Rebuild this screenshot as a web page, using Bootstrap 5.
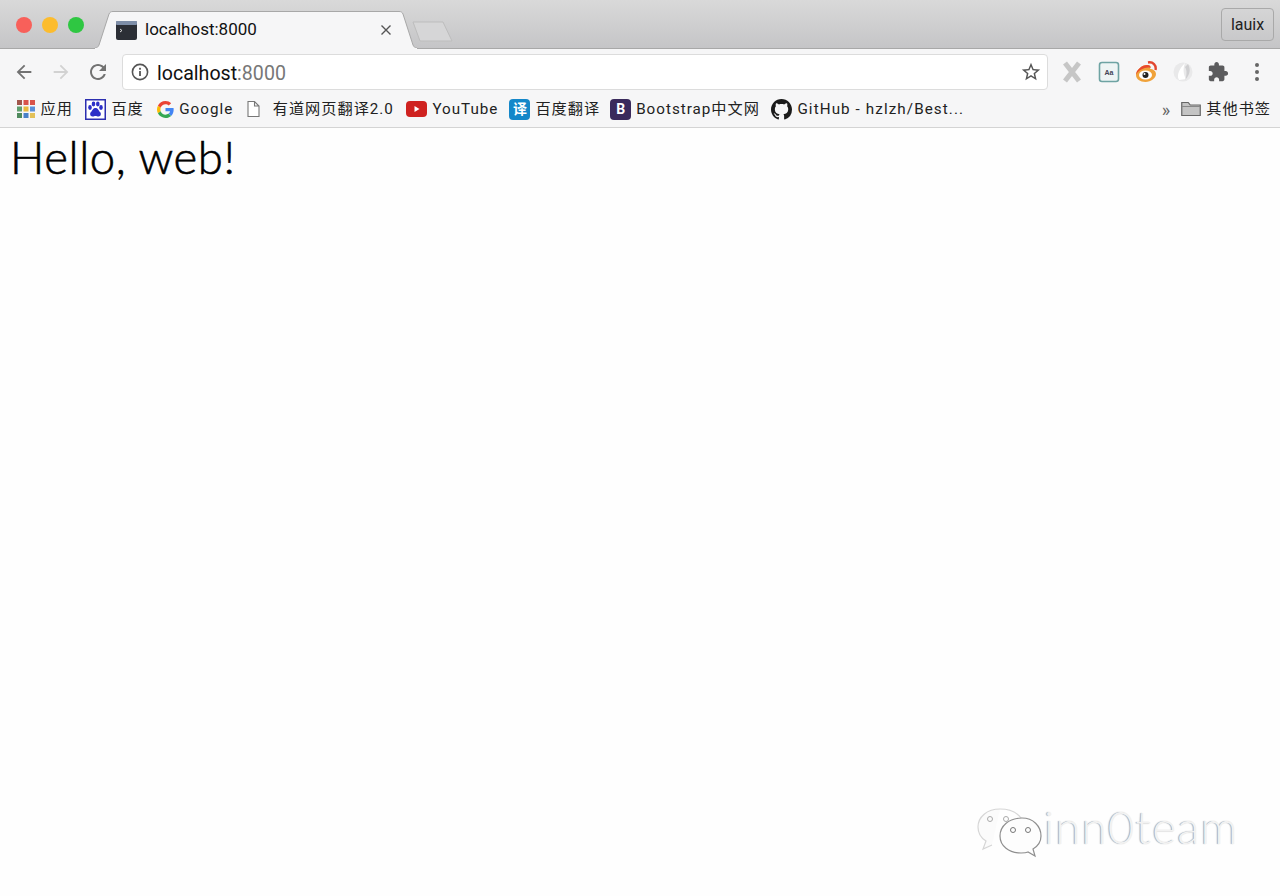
<!DOCTYPE html>
<html lang="en">
<head>
  <meta charset="UTF-8" />
  <title>localhost:8000</title>
  <link href="https://cdn.jsdelivr.net/npm/bootstrap@5.3.3/dist/css/bootstrap.min.css" rel="stylesheet">
  <style>
    html, body { height: 100%; }
    body {
      background: #fefefe;
      color: #111;
      font-family: Roboto, "Noto Sans CJK SC", sans-serif;
      overflow: hidden;
    }
    .browser-top { height: 128px; border-bottom: 1px solid #d4d4d4; }

    /* title strip */
    .tab-strip {
      height: 49px;
      background: linear-gradient(#d9d9d9, #c5c5c7);
      border-bottom: 1px solid #a8a8a8;
      padding-left: 16px;
    }
    .traffic { width: 16px; height: 16px; border-radius: 50%; margin-right: 10px; margin-top: 17px; }
    .traffic-red { background: #f8605a; }
    .traffic-yellow { background: #fcbc2e; }
    .traffic-green { background: #2fc742; margin-right: 0; }
    .page-tab {
      width: 324px; height: 38px; margin-left: 10px; margin-top: 11px;
      padding: 0 26px 0 22px; z-index: 1;
      font-size: 17px;
    }
    .tab-shape { position: absolute; left: 0; top: 0; }
    .tab-label { position: relative; margin-left: 8px; }
    .tab-favicon { position: relative; }
    .tab-close { position: relative; margin-left: auto; }
    .new-tab { margin-left: -8px; margin-top: 21px; }
    .profile-chip {
      width: 53px; height: 33px; margin-top: 8px; margin-right: 6px;
      border: 1px solid #a9a9a9; border-radius: 4px;
      font-size: 16px; color: #222;
    }

    /* toolbar */
    .tool-row { height: 43px; background: #f6f6f7; padding: 3px 0 0 13px; }
    .tool-btn { width: 22px; height: 22px; margin-right: 15px; }
    .tool-reload { width: 24px; height: 24px; margin-left: -1px; margin-right: 14px; }
    .address-box {
      width: 926px; height: 36px; margin-left: -2px;
      background: #fff; border: 1px solid #dcdcdc; border-radius: 4px;
      padding: 0 5px 0 8px; font-size: 19.6px;
    }
    .address-box .url-port { color: #777; }
    .url-text { margin-left: 8px; position: relative; top: 2px; }
    .ext-row { gap: 15px; margin-left: 13px; }
    .ext-slot { width: 22px; height: 22px; }
    .ext-puzzle { margin-left: -2px; margin-right: 2px; }

    /* bookmarks */
    .mark-row {
      height: 35px; background: #f6f6f7; padding: 0 9px 0 17px;
      font-size: 15.2px; letter-spacing: 1px; color: #222; white-space: nowrap;
    }
    .mark-item { gap: 5.5px; margin-right: 12px; }
    .mark-tile {
      width: 21px; height: 21px; border-radius: 4px; color: #fff;
      font-size: 14px; font-weight: 700; letter-spacing: 0;
    }
    .tile-fanyi { background: #1487c9; }
    .tile-bs { background: #3a2a5c; }
    .g-icon { margin-left: 1px; }
    .doc-icon { margin-right: 6px; }
    .mark-yt { margin-right: 11px; }
    .mark-fanyi { gap: 5px; margin-right: 10px; }
    .mark-bs { gap: 5px; margin-right: 11px; }
    .mark-last { letter-spacing: 1.1px; }
    .more-marks { margin-left: auto; margin-right: 10px; color: #666; font-size: 18px; }
    .other-marks { gap: 5px; }

    /* page */
    .hello-text {
      font-family: Lato, sans-serif; font-weight: 300;
      font-size: 45.5px; line-height: 1; color: #000;
      letter-spacing: .6px;
      -webkit-text-stroke: .6px #000;
      margin: 6px 0 0 10px;
    }
    .wm-mark { position: absolute; left: 976px; top: 805px; }
    .wm-text {
      position: absolute; left: 1044px; top: 799px;
      font-family: Lato, sans-serif; font-weight: 300; font-size: 46px; line-height: 1.2;
      letter-spacing: 1px;
      color: #f2f2f2; text-shadow: -1px 0 1px #a8a8a8;
    }
  </style>
</head>
<body>

  <div class="browser-top">
    <!-- tabs -->
    <div class="tab-strip d-flex">
      <span class="traffic traffic-red"></span>
      <span class="traffic traffic-yellow"></span>
      <span class="traffic traffic-green"></span>

      <div class="page-tab position-relative d-flex align-items-center">
        <svg class="tab-shape" width="324" height="38" viewBox="0 0 324 38">
          <path d="M0 38 L1 37 C3 37 4 36 5 34 L15 3 C16 1 17 .5 19 .5 H305 C307 .5 308 1 309 3 L319 34 C320 36 321 37 323 37 L324 38 Z" fill="#f6f6f7" stroke="#a8a8a8" stroke-width="1"/>
          <rect x="1" y="37" width="322" height="1" fill="#f6f6f7"/>
        </svg>
        <svg class="tab-favicon" width="21" height="19" viewBox="0 0 21 19">
          <rect width="21" height="19" rx="2" fill="#2c2f36"/>
          <rect width="21" height="4" rx="1" fill="#7e8ea8"/>
          <path d="M4 8l2 1.5-2 1.5" fill="none" stroke="#ddd" stroke-width="1"/>
        </svg>
        <span class="tab-label">localhost:8000</span>
        <svg class="tab-close" width="12" height="12" viewBox="0 0 12 12"><path d="M1.5 1.5l9 9M10.5 1.5l-9 9" stroke="#555" stroke-width="1.4"/></svg>
      </div>

      <svg class="new-tab" width="44" height="22" viewBox="0 0 44 22">
        <path d="M3 1 H33 L42 20 H10 Z" fill="#d6d6d7" stroke="#bdbdbd" stroke-width="1" stroke-linejoin="round"/>
      </svg>

      <div class="profile-chip ms-auto d-flex align-items-center justify-content-center">lauix</div>
    </div>

    <!-- toolbar -->
    <div class="tool-row d-flex align-items-center">
      <svg class="tool-btn" viewBox="0 0 24 24" fill="#727272"><path d="M20 11H7.83l5.59-5.59L12 4l-8 8 8 8 1.41-1.41L7.83 13H20v-2z"/></svg>
      <svg class="tool-btn" viewBox="0 0 24 24" fill="#d2d2d2"><path d="M4 11h12.170l-5.590-5.590L12 4l8 8-8 8-1.410-1.410L16.170 13H4v-2z"/></svg>
      <svg class="tool-btn tool-reload" viewBox="0 0 24 24" fill="#727272"><path d="M17.65 6.35C16.2 4.9 14.21 4 12 4c-4.42 0-7.99 3.58-7.99 8s3.57 8 7.99 8c3.73 0 6.84-2.55 7.73-6h-2.08c-.82 2.33-3.04 4-5.65 4-3.31 0-6-2.69-6-6s2.69-6 6-6c1.66 0 3.14.69 4.22 1.78L13 11h7V4l-2.35 2.35z"/></svg>

      <div class="address-box d-flex align-items-center">
        <svg width="18" height="18" viewBox="0 0 18 18">
          <circle cx="9" cy="9" r="7.6" fill="none" stroke="#555" stroke-width="1.6"/>
          <rect x="8.1" y="8" width="1.8" height="5" fill="#555"/>
          <rect x="8.1" y="4.8" width="1.8" height="1.9" fill="#555"/>
        </svg>
        <span class="url-text">localhost<span class="url-port">:8000</span></span>
        <svg class="ms-auto" width="22" height="22" viewBox="0 0 24 24" fill="#555"><path d="M22 9.24l-7.19-.62L12 2 9.19 8.63 2 9.24l5.46 4.73L5.82 21 12 17.27 18.18 21l-1.63-7.03L22 9.24zM12 15.4l-3.76 2.27 1-4.28-3.32-2.88 4.38-.38L12 6.1l1.71 4.04 4.38.38-3.32 2.88 1 4.28L12 15.4z"/></svg>
      </div>

      <div class="ext-row d-flex align-items-center">
        <svg class="ext-slot" viewBox="0 0 22 22"><path d="M4 2l14 18M18 2L4 20" stroke="#c6c6c6" stroke-width="5"/></svg>
        <svg class="ext-slot" viewBox="0 0 22 22">
          <rect x="1.5" y="1.5" width="19" height="19" rx="2.5" fill="#eef4f4" stroke="#6ea3a3" stroke-width="1.6"/>
          <text x="11" y="14" text-anchor="middle" font-size="7" font-weight="700" fill="#445" font-family="Liberation Sans, sans-serif">Aa</text>
        </svg>
        <svg class="ext-slot" viewBox="0 0 22 22">
          <path d="M1 14C1 9 7 4 12 4c3 0 4 2 3 4 3 0 6 2 6 5 0 4-5 8-10.500 8C5 21 1 18 1 14z" fill="#f0a23a"/>
          <path d="M1 14C1 9 7 4 12 4c3 0 4 1 3.500 3-4-1.500-12 1.500-14.500 7z" fill="#e8492e"/>
          <path d="M13 1.500c5-1 8.500 3 7.500 7.500" fill="none" stroke="#e2462f" stroke-width="2.400"/>
          <ellipse cx="10.500" cy="14" rx="6.500" ry="4.500" fill="#fff"/>
          <circle cx="10.500" cy="14" r="3" fill="#222"/>
          <circle cx="9.500" cy="13" r="1" fill="#fff"/>
        </svg>
        <svg class="ext-slot" viewBox="0 0 22 22">
          <circle cx="11" cy="11" r="9.500" fill="#e9e9ea"/>
          <path d="M7 19C4 14 8 7 13 2c-2 5-2 11 1 16z" fill="#fff"/>
          <path d="M16 3c3 5 2 11-3 16 2-5 2-10 0-13z" fill="#cfcfd1"/>
        </svg>
        <svg class="ext-slot ext-puzzle" viewBox="0 0 24 24" fill="#5c5c5e"><path d="M20.500 11H19V7c0-1.100-.9-2-2-2h-4V3.500C13 2.120 11.880 1 10.500 1S8 2.120 8 3.500V5H4c-1.100 0-1.990.9-1.990 2v3.800H3.500c1.490 0 2.700 1.210 2.700 2.700s-1.210 2.700-2.700 2.700H2V20c0 1.100.9 2 2 2h3.800v-1.500c0-1.490 1.210-2.700 2.700-2.700 1.490 0 2.700 1.210 2.700 2.700V22H17c1.100 0 2-.9 2-2v-4h1.500c1.380 0 2.500-1.120 2.500-2.500S21.880 11 20.500 11z"/></svg>
        <svg class="ext-slot" viewBox="0 0 22 22" fill="#666"><circle cx="11" cy="4" r="2"/><circle cx="11" cy="11" r="2"/><circle cx="11" cy="18" r="2"/></svg>
      </div>
    </div>

    <!-- bookmarks -->
    <div class="mark-row d-flex align-items-center">
      <div class="mark-item d-flex align-items-center">
        <svg width="18" height="18" viewBox="0 0 18 18">
          <rect width="5" height="5" fill="#a1564c"/><rect x="6.500" width="5" height="5" fill="#d9534a"/><rect x="13" width="5" height="5" fill="#d9534a"/>
          <rect y="6.500" width="5" height="5" fill="#5f9e6e"/><rect x="6.500" y="6.500" width="5" height="5" fill="#e8b93e"/><rect x="13" y="6.500" width="5" height="5" fill="#5b8fd9"/>
          <rect y="13" width="5" height="5" fill="#4f8a5d"/><rect x="6.500" y="13" width="5" height="5" fill="#4a80c8"/><rect x="13" y="13" width="5" height="5" fill="#e3c15a"/>
        </svg>
        <span>应用</span>
      </div>
      <div class="mark-item d-flex align-items-center">
        <svg width="21" height="21" viewBox="0 0 21 21">
          <rect x=".75" y=".75" width="19.500" height="19.500" fill="#fff" stroke="#2c2fb0" stroke-width="1.500"/>
          <g fill="#2c2fc8">
            <ellipse cx="5" cy="8.500" rx="1.800" ry="2.400"/><ellipse cx="8.500" cy="5" rx="1.800" ry="2.400"/><ellipse cx="12.800" cy="5" rx="1.800" ry="2.400"/><ellipse cx="16" cy="8.500" rx="1.800" ry="2.400"/>
            <path d="M10.500 9c-2.500 0-3 2.500-4.500 4-1.500 1.500-1 4.500 1.500 4.500 1.300 0 2-.5 3-.5s1.700.5 3 .5c2.500 0 3-3 1.500-4.500-1.500-1.500-2-4-4.500-4z"/>
          </g>
        </svg>
        <span>百度</span>
      </div>
      <div class="mark-item d-flex align-items-center">
        <svg class="g-icon" width="17" height="17" viewBox="0 0 48 48">
          <path fill="#EA4335" d="M24 9.500c3.500 0 6.700 1.300 9.100 3.500l6.800-6.800C35.800 2.400 30.300 0 24 0 14.600 0 6.500 5.400 2.600 13.200l7.900 6.200C12.400 13.700 17.700 9.500 24 9.500z"/>
          <path fill="#4285F4" d="M47 24.500c0-1.600-.2-3.100-.4-4.500H24v9h12.900c-.6 3-2.200 5.500-4.700 7.200l7.700 6C44.400 38 47 31.800 47 24.500z"/>
          <path fill="#FBBC05" d="M10.500 28.600c-.5-1.400-.8-3-.8-4.600s.3-3.200.8-4.600l-7.900-6.200C.9 16.500 0 20.100 0 24s.9 7.500 2.600 10.800l7.900-6.200z"/>
          <path fill="#34A853" d="M24 48c6.500 0 11.900-2.100 15.900-5.800l-7.700-6c-2.200 1.400-4.900 2.300-8.200 2.300-6.300 0-11.600-4.200-13.500-9.900l-7.900 6.200C6.500 42.600 14.600 48 24 48z"/>
        </svg>
        <span>Google</span>
      </div>
      <div class="mark-item d-flex align-items-center">
        <svg width="16" height="18" viewBox="0 0 16 18" class="doc-icon">
          <path d="M3 1.500h6.500L14 6v10.500H3z M9.500 1.500V6H14" fill="#fff" stroke="#777" stroke-width="1.100"/>
        </svg>
        <span>有道网页翻译2.0</span>
      </div>
      <div class="mark-item mark-yt d-flex align-items-center">
        <svg width="21" height="16" viewBox="0 0 21 16">
          <rect width="21" height="16" rx="4" fill="#cf2220"/>
          <path d="M8.500 5l5 3-5 3z" fill="#fff"/>
        </svg>
        <span>YouTube</span>
      </div>
      <div class="mark-item mark-fanyi d-flex align-items-center">
        <span class="mark-tile tile-fanyi d-flex align-items-center justify-content-center">译</span>
        <span>百度翻译</span>
      </div>
      <div class="mark-item mark-bs d-flex align-items-center">
        <span class="mark-tile tile-bs d-flex align-items-center justify-content-center">B</span>
        <span>Bootstrap中文网</span>
      </div>
      <div class="mark-item mark-last d-flex align-items-center">
        <svg width="21" height="21" viewBox="0 0 16 16" fill="#1b1b1b"><path d="M8 0C3.580 0 0 3.580 0 8c0 3.540 2.290 6.530 5.470 7.590.4.070.55-.17.55-.38 0-.19-.01-.82-.01-1.490-2.010.37-2.530-.49-2.690-.94-.09-.23-.48-.94-.82-1.130-.28-.15-.68-.52-.01-.53.63-.01 1.080.58 1.230.82.72 1.210 1.870.87 2.330.66.070-.52.28-.87.51-1.070-1.780-.2-3.640-.89-3.640-3.950 0-.87.31-1.590.82-2.150-.08-.2-.36-1.020.08-2.120 0 0 .67-.21 2.200.82.64-.18 1.320-.27 2-.27.68 0 1.360.09 2 .27 1.530-1.040 2.200-.82 2.200-.82.44 1.100.16 1.920.08 2.120.51.56.82 1.270.82 2.150 0 3.070-1.870 3.750-3.650 3.950.29.25.54.73.54 1.480 0 1.070-.01 1.930-.01 2.200 0 .21.15.46.55.38A8.013 8.013 0 0016 8c0-4.420-3.580-8-8-8z"/></svg>
        <span>GitHub - hzlzh/Best...</span>
      </div>

      <span class="more-marks">»</span>
      <div class="other-marks d-flex align-items-center">
        <svg width="20" height="16" viewBox="0 0 20 16">
          <path d="M.75 14.500V1.500h6.500l2 2.500h10v10.500z" fill="#c4c4c4" stroke="#666" stroke-width="1.200"/>
          <path d="M1 5.500h18" stroke="#888"/>
        </svg>
        <span>其他书签</span>
      </div>
    </div>
  </div>

  <!-- page content -->
  <p class="hello-text">Hello, web!</p>

  <!-- watermark -->
  <svg class="wm-mark" width="66" height="56" viewBox="0 0 66 56">
    <path d="M24 4C11 4 2 12 2 22c0 6 3 11 8 14l-3 8 9-4" fill="#fbfbfb" stroke="#d6d6d6" stroke-width="1.200"/>
    <path d="M46 14C41 7 33 4 24 4" fill="none" stroke="#d6d6d6" stroke-width="1.200"/>
    <path d="M46 13c-13 0-22 8-22 18s9 17 21 17c3 0 5 0 7-1l7 4-2-7c5-3 8-8 8-13 0-10-8-18-19-18z" fill="#fdfdfd" stroke="#8f8f8f" stroke-width="1.200"/>
    <circle cx="14" cy="14" r="2.500" fill="none" stroke="#aaa"/><circle cx="30" cy="14" r="2.500" fill="none" stroke="#aaa"/>
    <circle cx="37" cy="25" r="2.500" fill="none" stroke="#777"/><circle cx="52" cy="25" r="2.500" fill="none" stroke="#777"/>
  </svg>
  <div class="wm-text">inn0team</div>

  <script src="https://cdn.jsdelivr.net/npm/bootstrap@5.3.3/dist/js/bootstrap.bundle.min.js"></script>
</body>
</html>
